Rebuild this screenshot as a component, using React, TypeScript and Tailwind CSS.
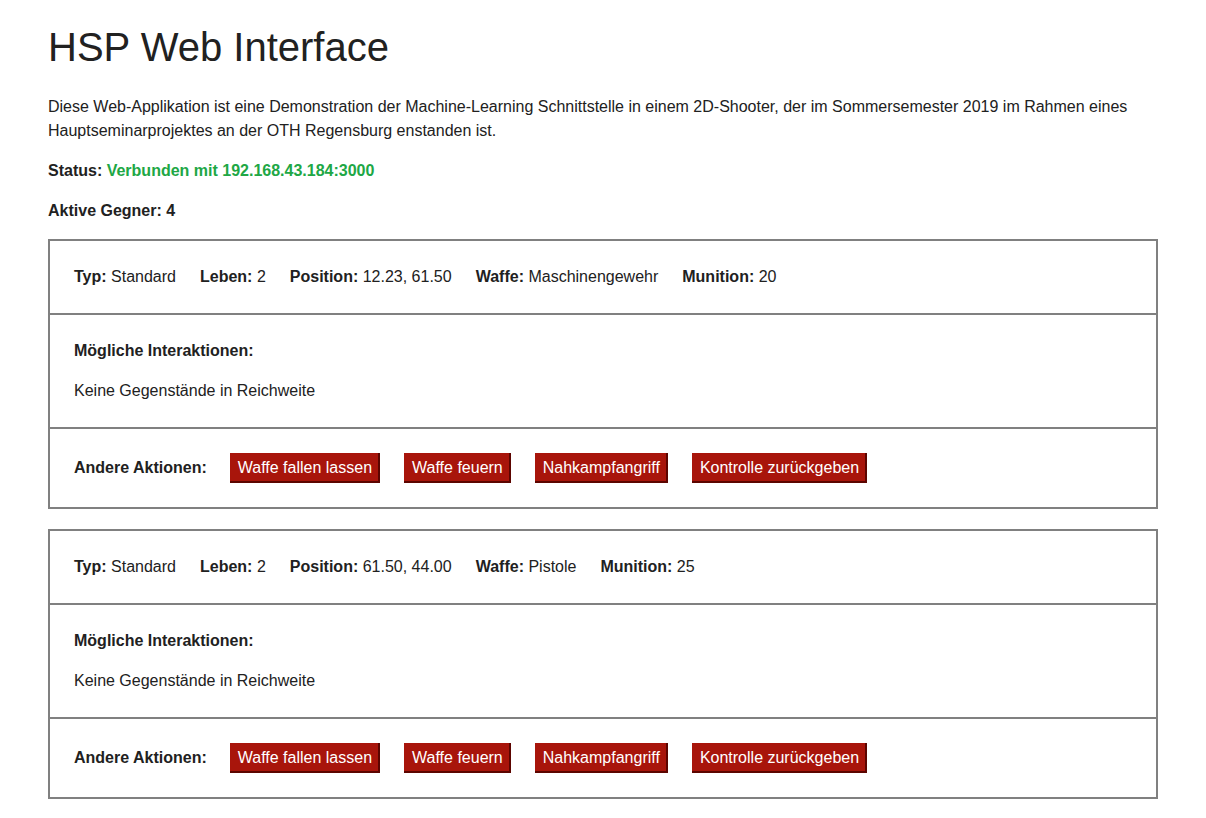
import React from 'react';

interface Enemy {
  typ: string;
  leben: number;
  position: string;
  waffe: string;
  munition: number;
}

const enemies: Enemy[] = [
  { typ: 'Standard', leben: 2, position: '12.23, 61.50', waffe: 'Maschinengewehr', munition: 20 },
  { typ: 'Standard', leben: 2, position: '61.50, 44.00', waffe: 'Pistole', munition: 25 },
];

const actions = ['Waffe fallen lassen', 'Waffe feuern', 'Nahkampfangriff', 'Kontrolle zurückgeben'];

function Field({ label, value }: { label: string; value: React.ReactNode }) {
  return (
    <span>
      <b className="font-bold">{label}:</b> {value}
    </span>
  );
}

function EnemyCard({ enemy }: { enemy: Enemy }) {
  return (
    <div className="border-2 border-[#808080]">
      <div className="flex gap-6 p-6">
        <Field label="Typ" value={enemy.typ} />
        <Field label="Leben" value={enemy.leben} />
        <Field label="Position" value={enemy.position} />
        <Field label="Waffe" value={enemy.waffe} />
        <Field label="Munition" value={enemy.munition} />
      </div>
      <div className="border-t-2 border-[#808080] p-6 flex flex-col gap-4">
        <b className="font-bold">Mögliche Interaktionen:</b>
        <span>Keine Gegenstände in Reichweite</span>
      </div>
      <div className="border-t-2 border-[#808080] p-6 flex items-center gap-6">
        <b className="font-bold -mr-px">Andere Aktionen:</b>
        {actions.map((a) => (
          <button
            key={a}
            className="bg-[#a8150b] text-white pl-2 pr-1.5 pt-px h-[30px] leading-[27px] border-r-2 border-b-2 border-[#5c0500] cursor-pointer"
          >
            {a}
          </button>
        ))}
      </div>
    </div>
  );
}

export default function App() {
  return (
    <div
      className="bg-white text-[#212121] text-base leading-6 px-12 pb-5"
      style={{ fontFamily: '"Liberation Sans", Arial, sans-serif' }}
    >
      <h1 className="text-[40px] leading-[48px] pt-[23px] mb-6">HSP Web Interface</h1>
      <p>
        Diese Web-Applikation ist eine Demonstration der Machine-Learning Schnittstelle in einem 2D-Shooter, der im
        Sommersemester 2019 im Rahmen eines Hauptseminarprojektes an der OTH Regensburg enstanden ist.
      </p>
      <p className="mt-4 font-bold">
        Status: <span className="text-[#20a745]">Verbunden mit 192.168.43.184:3000</span>
      </p>
      <p className="mt-4 font-bold">Aktive Gegner: 4</p>
      <div className="mt-4 flex flex-col gap-5">
        {enemies.map((e, i) => (
          <EnemyCard key={i} enemy={e} />
        ))}
      </div>
    </div>
  );
}
